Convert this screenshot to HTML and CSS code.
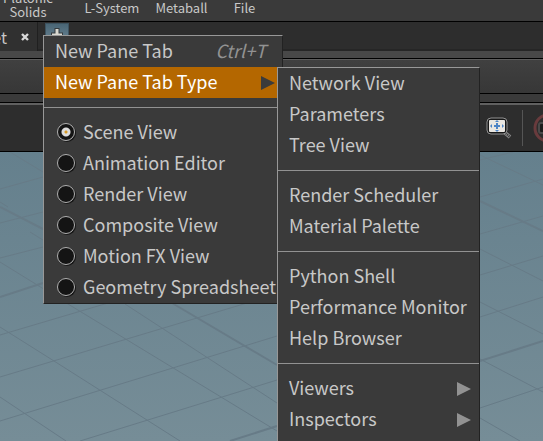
FILE: index.html
```html
<!DOCTYPE html>
<html lang="en">
<head>
<meta charset="utf-8">
<title>Pane Tabs</title>
<link rel="stylesheet" href="styles.css">
</head>
<body>
<div class="app">
  <header class="shelf">
    <button class="tool tool-first">Platonic<br>Solids</button>
    <button class="tool tool-wide">L-System</button>
    <button class="tool">Metaball</button>
    <button class="tool">File</button>
  </header>
  <nav class="tabs">
    <div class="tab"><span>et</span>
      <button class="close" aria-label="Close tab"><svg width="8" height="8" viewBox="0 0 8 8"><path d="M1 1l6 6M7 1l-6 6" stroke="#d8d8d8" stroke-width="2.4"/></svg></button>
    </div>
    <div class="add-wrap">
      <button class="add" aria-label="New tab"><svg width="12" height="14" viewBox="0 0 12 14"><path d="M6 0v14M0 7h12" stroke="#353b3e" stroke-width="5"/><path d="M6 1v12M1 7h10" stroke="#d8d8d0" stroke-width="3"/></svg></button>
      <div class="menu main-menu">
        <button class="item"><span>New Pane Tab</span><span class="key">Ctrl+T</span></button>
        <button class="item active"><span>New Pane Tab Type</span><svg class="arrow" width="14" height="14" viewBox="0 0 14 14"><path d="M0 0l14 7-14 7z" fill="currentColor"/></svg></button>
        <hr>
        <label class="item"><input type="radio" name="pane" checked>Scene View</label>
        <label class="item"><input type="radio" name="pane">Animation Editor</label>
        <label class="item"><input type="radio" name="pane">Render View</label>
        <label class="item"><input type="radio" name="pane">Composite View</label>
        <label class="item"><input type="radio" name="pane">Motion FX View</label>
        <label class="item"><input type="radio" name="pane">Geometry Spreadsheet</label>
        <div class="menu sub-menu">
          <button class="item">Network View</button>
          <button class="item">Parameters</button>
          <button class="item">Tree View</button>
          <hr>
          <button class="item">Render Scheduler</button>
          <button class="item">Material Palette</button>
          <hr>
          <button class="item">Python Shell</button>
          <button class="item">Performance Monitor</button>
          <button class="item">Help Browser</button>
          <hr>
          <button class="item"><span>Viewers</span><svg class="arrow" width="14" height="14" viewBox="0 0 14 14"><path d="M0 0l14 7-14 7z" fill="currentColor"/></svg></button>
          <button class="item"><span>Inspectors</span><svg class="arrow" width="14" height="14" viewBox="0 0 14 14"><path d="M0 0l14 7-14 7z" fill="currentColor"/></svg></button>
          <hr>
        </div>
      </div>
    </div>
  </nav>
  <div class="strip"></div>
  <div class="path-bar"></div>
  <div class="gap-bar"></div>
  <div class="toolbar">
    <button class="frame-view" aria-label="Frame view"><svg width="26" height="24" viewBox="0 0 26 24">
      <path d="M18 16l6 5" stroke="#858585" stroke-width="4"/><path d="M18 16l6 5" stroke="#303030" stroke-width="2" stroke-dasharray="1 1"/>
      <rect x="1" y="2" width="20" height="16" rx="4" fill="#181818" stroke="#929292"/>
      <rect x="3" y="4" width="16" height="12" rx="1" fill="#e9e6e1"/>
      <path d="M11 7v6M8 10h6" stroke="#4c83c5" stroke-width="2"/>
      <path d="M9 6l2-2 2 2zM9 14l2 2 2-2zM6 8l-2 2 2 2zM16 8l2 2-2 2z" fill="#4c83c5"/>
    </svg></button>
    <span class="divider"></span>
    <button class="record" aria-label="Display option"><svg width="30" height="30" viewBox="0 0 30 30"><circle cx="15" cy="15" r="13" fill="none" stroke="#693b3d" stroke-width="3"/><rect x="6" y="10" width="14" height="10" rx="2" fill="#1c1c1c" stroke="#4a4a4a" stroke-width="2"/></svg></button>
  </div>
  <main class="viewport">
    <svg class="grid" viewBox="0 152 543 289" preserveAspectRatio="xMinYMin slice" aria-hidden="true">
      <path d="M10 152L43 172M0 189L43 177M0 202L8 207M0 223L43 212M0 258L43 247M0 262L68 304L272 428L294 441M30 232L43 240M0 327L54 361L180 441M0 397L66 441M125 304L277 403M0 335L108 303M0 377L247 303M0 421L277 336M80 441L277 380M480 155L543 185M480 160L513 152M480 197L543 179M480 234L543 216M480 249L543 281M480 275L543 256M480 317L543 297M480 302L543 334M480 359L543 392M480 408L543 387M480 418L520 441"/>
      <path class="major" d="M0 207L43 229M0 297L43 283M172 303L277 365M230 441L277 426M480 201L543 231M480 361L543 341"/>
    </svg>
  </main>
</div>
</body>
</html>
```
FILE: styles.css
```css
* { box-sizing: border-box; }
body {
  margin: 0;
  overflow: hidden;
  font-family: "Noto Sans CJK JP", "Noto Sans", sans-serif;
  color: #c8c8c8;
  background: #2d2d2d;
}
button {
  margin: 0;
  padding: 0;
  border: 0;
  background: none;
  color: inherit;
  font: inherit;
}
svg { display: block; }
.app {
  display: flex;
  flex-direction: column;
  height: 100vh;
  overflow: hidden;
}
.shelf {
  display: flex;
  flex: none;
  align-items: flex-end;
  height: 22px;
  padding-bottom: 5px;
  border-bottom: 1px solid #000;
  background: #3a3a3a;
}
.tool {
  width: 63px;
  font-size: 13px;
  line-height: 16px;
  text-align: center;
}
.tool-first {
  align-self: flex-start;
  width: 56px;
  margin-top: -9px;
  line-height: 14px;
}
.tool-wide {
  width: 76px;
  margin-left: 18px;
}
.tabs {
  display: flex;
  flex: none;
  height: 29px;
  border-bottom: 2px solid #262626;
  background: #2d2d2d;
}
.tab {
  display: flex;
  align-items: center;
  justify-content: flex-end;
  gap: 14px;
  width: 38px;
  height: 29px;
  padding: 0 8px 0 0;
  border-right: 1px solid #202020;
  background: #303030;
  font-size: 16px;
}
.add-wrap {
  position: relative;
  padding: 1px 0 0 7px;
}
.add {
  display: flex;
  justify-content: center;
  width: 24px;
  height: 27px;
  padding-top: 4px;
  border: 1px solid #3d5360;
  background: linear-gradient(#496575, #7893a1);
}
.menu {
  position: absolute;
  z-index: 2;
  border: 1px solid #222;
  border-top-color: #989898;
  border-left-color: #989898;
  background: #3a3a3a;
}
.main-menu {
  top: 13px;
  left: 5px;
  width: 240px;
}
.sub-menu {
  top: 31px;
  left: 233px;
  width: 203px;
}
.item {
  display: flex;
  align-items: center;
  width: 100%;
  height: 31px;
  padding: 0 16px 2px 11px;
  font-size: 18px;
  line-height: 29px;
  white-space: nowrap;
  text-align: left;
}
.key {
  margin-left: auto;
  color: #929292;
  font-style: italic;
}
.arrow {
  margin: 2px 0 0 auto;
  color: #929292;
}
.sub-menu .item { padding-right: 8px; }
.item.active {
  padding-right: 7px;
  background: #b46700;
  color: #fff;
}
.active .arrow { color: #3b3b3b; }
hr {
  height: 1px;
  margin: 9px 0;
  border: 0;
  background: #929292;
}
input[type="radio"] {
  appearance: none;
  flex: none;
  width: 18px;
  height: 18px;
  margin: 1px 8px 0 2px;
  border: 1px solid #b0b0b0;
  border-radius: 50%;
  background: #141414;
  box-shadow: 1px 1px 0 #181818;
}
input[type="radio"]:checked {
  background: radial-gradient(circle, #d59a28 0 1px, #dcdcdc 2px 4px, #141414 5px);
}
.strip {
  flex: none;
  height: 8px;
  border-bottom: 1px solid #000;
  background: #484848;
}
.path-bar {
  flex: none;
  height: 35px;
  border-top: 1px solid #5c5c5c;
  border-bottom: 1px solid #000;
  background: linear-gradient(#404040, #373737);
}
.gap-bar {
  flex: none;
  height: 9px;
  border-bottom: 1px solid #000;
  background: #3a3a3a;
}
.toolbar {
  display: flex;
  flex: none;
  align-items: center;
  justify-content: flex-end;
  gap: 10px;
  height: 49px;
  border-top: 2px solid #606060;
  border-bottom: 1px solid #000;
  background: #2d2d2d;
}
.divider {
  width: 1px;
  height: 36px;
  background: #555;
}
.record {
  width: 10px;
  overflow: hidden;
}
.viewport {
  flex: 1;
  min-height: 0;
  background: linear-gradient(#65808d, #768d97);
}
.grid {
  width: 100%;
  height: 100%;
  fill: none;
  stroke: #677b87;
}
.major { stroke-width: 2; }
```
